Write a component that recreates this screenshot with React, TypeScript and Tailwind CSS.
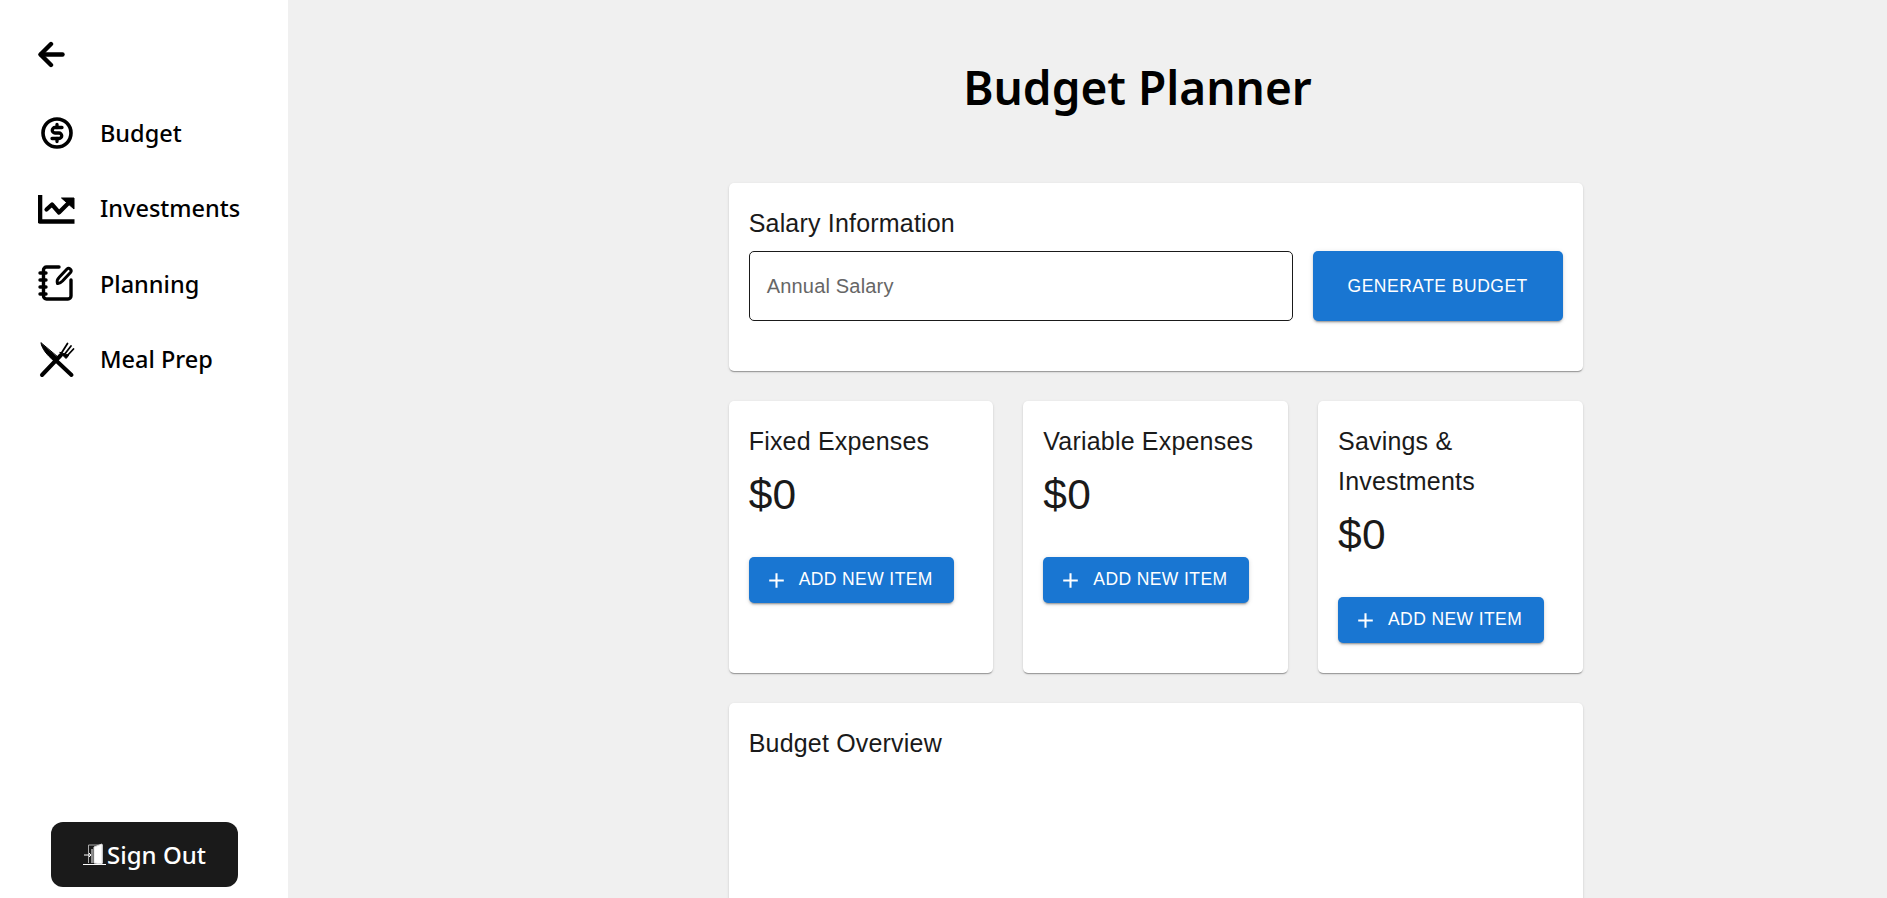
import React from 'react';

function BackIcon() {
  return (
    <svg width="38" height="38" viewBox="0 0 38 38" fill="none" stroke="#000" strokeWidth="4.4" strokeLinecap="round" strokeLinejoin="round">
      <path d="M3 19.5h21.500" />
      <path d="M13 9 2.500 19.500 13 30" />
    </svg>
  );
}

function BudgetIcon() {
  return (
    <svg width="38" height="38" viewBox="0 0 38 38" fill="none" stroke="#000" strokeWidth="3.6" strokeLinecap="round" strokeLinejoin="round">
      <circle cx="19" cy="19" r="14" />
      <path d="M24 13.500h-7a2.700 2.700 0 0 0 0 5.500h4a2.700 2.700 0 0 1 0 5.500h-7" strokeWidth="3.300" />
      <path d="M19 10.500v3M19 24.500v3" strokeWidth="3.300" />
    </svg>
  );
}

function InvestmentsIcon() {
  return (
    <svg width="38" height="38" viewBox="0 0 38 38" fill="none" stroke="#000" strokeLinejoin="round">
      <path d="M2 5v26.500h34.500" strokeWidth="4.600" />
      <path d="M8.500 19.500l5.500-5 7 8 11-11" strokeWidth="4.200" strokeLinecap="round" />
      <path d="M23.500 8h12.500v11z" fill="#000" stroke="#000" strokeWidth="1" />
    </svg>
  );
}

function PlanningIcon() {
  return (
    <svg width="38" height="38" viewBox="0 0 38 38" fill="none" stroke="#000" strokeWidth="3.400" strokeLinecap="round" strokeLinejoin="round">
      <path d="M21 2H8.500A3 3 0 0 0 5.500 5v26a3 3 0 0 0 3 3H30a3 3 0 0 0 3-3V15" />
      <path d="M2 8h6M2 15h6M2 22h6M2 29h6" />
      <path d="M19.500 18.500c-.8-2.500 0-4.500 1.500-6l8-8.500c2-2 5.500 1 3.500 3.500l-8 8.500c-1.500 1.500-3 3-5 2.500z" strokeWidth="3" />
    </svg>
  );
}

function MealIcon() {
  return (
    <svg width="38" height="38" viewBox="0 0 38 38" fill="none" stroke="#000" strokeLinecap="round" strokeLinejoin="round">
      <path d="M3 2c1 6 6 12 13 18l4-3.500z" fill="#000" strokeWidth="1" />
      <path d="M17 18.500l16.500 15.500" strokeWidth="4" />
      <path d="M4 34l19-20" strokeWidth="4" />
      <path d="M22 11.500l6 6c1-1 2-2 2.500-3z" fill="#000" strokeWidth="1" />
      <path d="M23.500 12l6-9.500M26 14l7-9M28.500 15.500l7-7.500" strokeWidth="1.800" />
    </svg>
  );
}

function DoorIcon() {
  return (
    <svg width="24" height="24" viewBox="0 0 24 24" fill="none" stroke="#fff" strokeWidth="1" className="shrink-0">
      <path d="M0 21.500h23" />
      <path d="M5.500 20V2h14v18" stroke="#aaa" />
      <path d="M11 4l8-3v20l-8-1z" fill="#fff" stroke="#ddd" />
      <path d="M1 12h7M6 10l2 2-2 2" />
      <path d="M9 6v14" />
    </svg>
  );
}

function PlusIcon() {
  return (
    <svg width="25" height="25" viewBox="0 0 24 24" fill="#fff" className="shrink-0">
      <path d="M19 12.998h-6v6h-2v-6H5v-2h6v-6h2v6h6v2z" />
    </svg>
  );
}

const navItems = [
  { label: 'Budget', icon: <BudgetIcon /> },
  { label: 'Investments', icon: <InvestmentsIcon /> },
  { label: 'Planning', icon: <PlanningIcon /> },
  { label: 'Meal Prep', icon: <MealIcon /> },
];

function AddButton() {
  return (
    <button className="flex h-[46px] w-[205.500px] items-center gap-[10px] rounded-[5px] bg-[#1976d2] pl-[15px] text-[17.5px] leading-none tracking-[0.4px] text-white shadow-[0_3px_1px_-2px_rgba(0,0,0,0.2),0_2px_2px_0_rgba(0,0,0,0.14),0_1px_5px_0_rgba(0,0,0,0.12)]">
      <PlusIcon />
      ADD NEW ITEM
    </button>
  );
}

const cardClass =
  'rounded-[5px] bg-white shadow-[0_2px_1px_-1px_rgba(0,0,0,0.2),0_1px_1px_0_rgba(0,0,0,0.14),0_1px_3px_0_rgba(0,0,0,0.12)]';

function ExpenseCard({ title }: { title: React.ReactNode }) {
  return (
    <div className={cardClass + ' flex-1 px-[20px] pt-[20px] pb-[30px]'}>
      <h3 className="text-[25px] leading-[40px] tracking-[0.19px] text-[#1a1a1a]">{title}</h3>
      <div className="mt-[8px] text-[42.5px] leading-[52.5px] tracking-[0.3px] text-[#1a1a1a]">$0</div>
      <div className="mt-[35.5px]">
        <AddButton />
      </div>
    </div>
  );
}

export default function App() {
  return (
    <div className="flex h-[898px] overflow-hidden bg-[#f0f0f0] font-['Liberation_Sans',sans-serif]">
      {/* Sidebar */}
      <aside className="flex w-[288px] shrink-0 flex-col bg-white px-[38px] pt-[35px] pb-[11px] font-['Noto_Sans',sans-serif]">
        <div className="h-[38px]">
          <BackIcon />
        </div>
        <nav className="mt-[41px] flex flex-col gap-[37.5px]">
          {navItems.map((item) => (
            <div key={item.label} className="flex h-[38px] items-center gap-[24px]">
              {item.icon}
              <span className="pt-[1px] text-[23.5px] font-medium text-black">{item.label}</span>
            </div>
          ))}
        </nav>
        <button className="mt-auto ml-[13px] flex h-[65px] w-[187px] items-center justify-center rounded-[12px] bg-[#1a1a1a] text-[24px] font-medium text-white">
          <DoorIcon />
          Sign Out
        </button>
      </aside>

      {/* Main */}
      <main className="flex-1 overflow-hidden">
        <h1 className="pt-[50px] pl-[100px] text-center font-['Noto_Sans',sans-serif] text-[46px] leading-[74px] font-semibold text-black">
          Budget Planner
        </h1>
        <div className="mt-[59px] mr-[304.33px] ml-auto flex w-[854px] flex-col gap-[30px]">
          <section className={cardClass + ' h-[188px] p-[20px]'}>
            <h3 className="text-[25px] leading-[40px] tracking-[0.19px] text-[#1a1a1a]">Salary Information</h3>
            <div className="mt-[8px] flex gap-[20px]">
              <div className="flex h-[70px] flex-1 items-center rounded-[5px] border border-[#1a1a1a] px-[17px] text-[20px] tracking-[0.19px] text-[#666]">
                Annual Salary
              </div>
              <button className="h-[70px] w-[250px] rounded-[5px] bg-[#1976d2] text-[17.5px] tracking-[0.5px] text-white shadow-[0_3px_1px_-2px_rgba(0,0,0,0.2),0_2px_2px_0_rgba(0,0,0,0.14),0_1px_5px_0_rgba(0,0,0,0.12)]">
                GENERATE BUDGET
              </button>
            </div>
          </section>

          <div className="flex gap-[30px]">
            <ExpenseCard title="Fixed Expenses" />
            <ExpenseCard title="Variable Expenses" />
            <ExpenseCard title={<>Savings &amp;<br />Investments</>} />
          </div>

          <section className={cardClass + ' h-[300px] p-[20px]'}>
            <h3 className="text-[25px] leading-[40px] tracking-[0.19px] text-[#1a1a1a]">Budget Overview</h3>
          </section>
        </div>
      </main>
    </div>
  );
}
